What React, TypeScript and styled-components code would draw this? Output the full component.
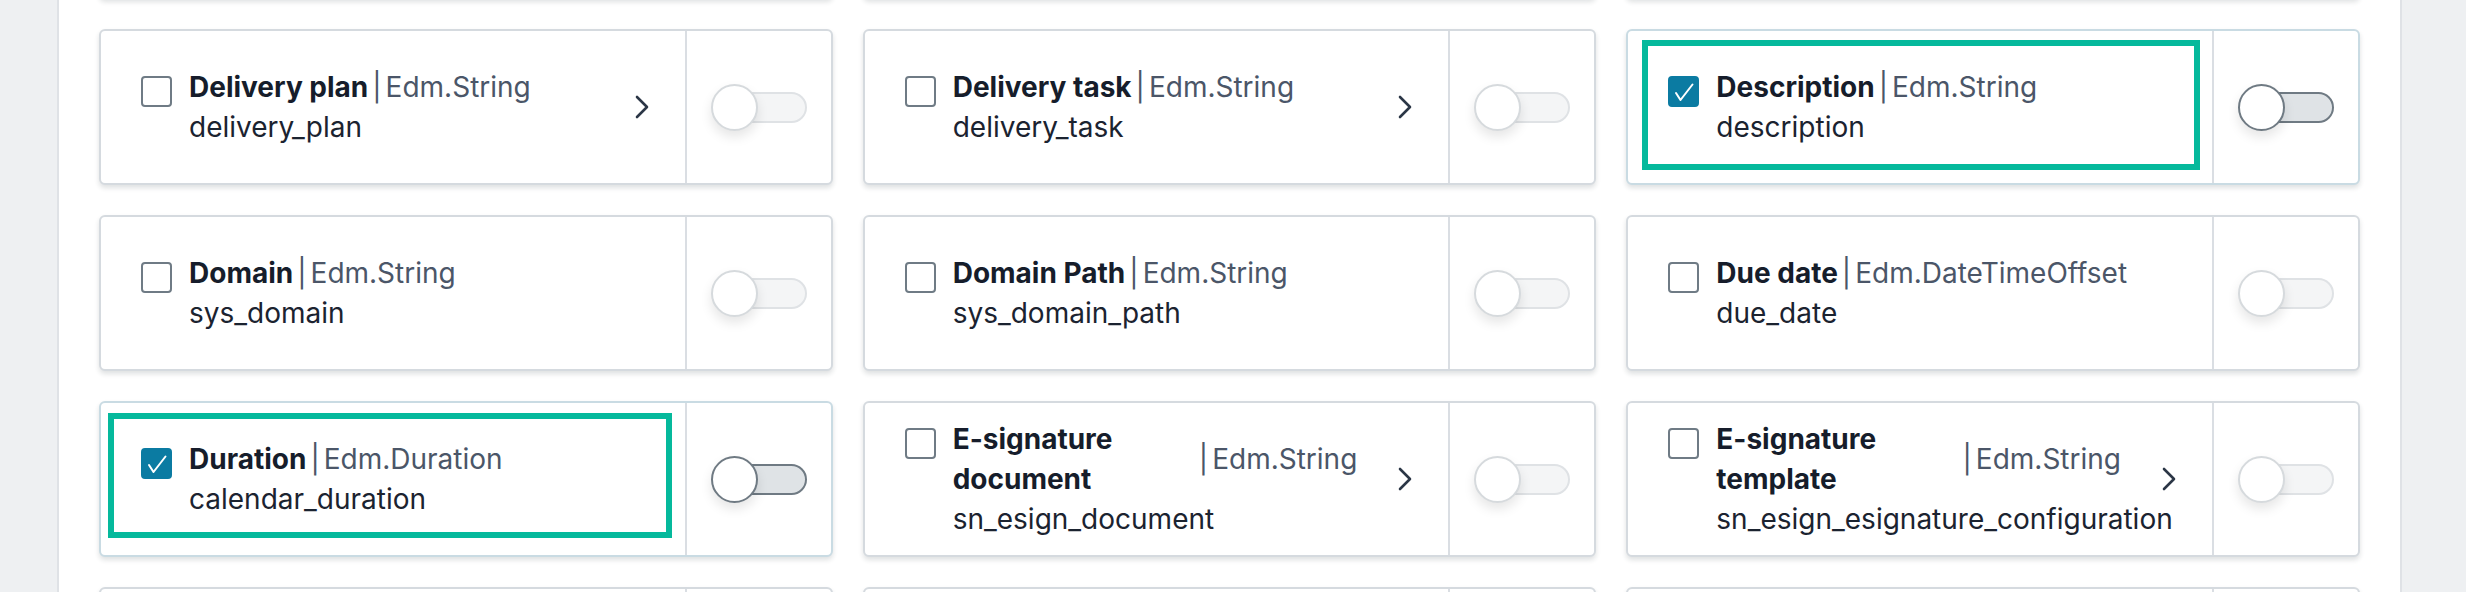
import React from 'react';
import styled, { createGlobalStyle } from 'styled-components';

const GlobalStyle = createGlobalStyle`
  html, body {
    margin: 0;
    height: 592px;
    overflow: hidden;
    background: #eef0f2;
    font-family: Inter, 'Liberation Sans', sans-serif;
  }
`;

const Page = styled.div`
  display: flex;
  height: 592px;
  overflow: hidden;
`;

const Panel = styled.main`
  box-sizing: border-box;
  margin-left: 57px;
  width: 2345px;
  background: #fff;
  border-left: 2px solid #dfe2e6;
  border-right: 2px solid #dfe2e6;
  padding: 0 40px;
`;

const Grid = styled.div`
  display: grid;
  grid-template-columns: repeat(3, minmax(0, 1fr));
  grid-auto-rows: 156px;
  column-gap: 30px;
  row-gap: 30px;
  margin-top: -157px;
`;

const Card = styled.div<{ $checked?: boolean }>`
  position: relative;
  box-sizing: border-box;
  display: flex;
  background: #fff;
  border: 2px solid ${(p) => (p.$checked ? '#c9dbe3' : '#d5dadf')};
  border-radius: 6px;
  box-shadow: 0 3px 5px rgba(30, 40, 50, 0.14);
`;

const Main = styled.div`
  flex: 1;
  min-width: 0;
  display: flex;
  align-items: center;
  gap: 40px;
  padding: 0 35px 0 40px;
`;

const Body = styled.div`
  flex: 1;
  min-width: 0;
  display: flex;
  align-items: flex-start;
  gap: 17px;
`;

const Checkbox = styled.span<{ $checked?: boolean }>`
  box-sizing: border-box;
  flex: none;
  width: 31px;
  height: 31px;
  margin-top: 9px;
  border-radius: 4px;
  border: 2px solid ${(p) => (p.$checked ? '#0b7ba2' : '#6f7b85')};
  background: ${(p) => (p.$checked ? '#0b7ba2' : '#fff')};
  display: flex;
`;

const Info = styled.div`
  flex: 1;
  min-width: 0;
  font-size: 28px;
  line-height: 40px;
`;

const Header = styled.div`
  display: flex;
  align-items: center;
`;

const Title = styled.span`
  flex: 0 1 auto;
  min-width: 0;
  font-weight: 700;
  color: #161d2b;
`;

const Type = styled.span`
  flex: none;
  margin-left: 4px;
  white-space: nowrap;
  color: #4b5668;
`;

const Pipe = styled.span`
  margin-right: 4px;
`;

const Code = styled.div`
  white-space: nowrap;
  color: #1b2330;
`;

const Chevron = styled.svg`
  flex: none;
  width: 16px;
  height: 24px;
`;

const ToggleCell = styled.div`
  flex: none;
  width: 146px;
  box-sizing: border-box;
  border-left: 2px solid #dadee3;
  display: flex;
  align-items: center;
  justify-content: center;
`;

const Toggle = styled.span`
  position: relative;
  display: block;
  width: 96px;
  height: 47px;
`;

const Track = styled.span<{ $on?: boolean }>`
  position: absolute;
  left: 14px;
  right: 0;
  top: 8px;
  bottom: 8px;
  box-sizing: border-box;
  border-radius: 16px;
  border: 2px solid ${(p) => (p.$on ? '#6f7a83' : '#dfe2e5')};
  background: ${(p) => (p.$on ? '#dfe3e6' : '#f4f5f6')};
`;

const Thumb = styled.span<{ $on?: boolean }>`
  position: relative;
  display: block;
  box-sizing: border-box;
  width: 47px;
  height: 47px;
  border-radius: 50%;
  background: #fff;
  border: 2px solid ${(p) => (p.$on ? '#6f7a83' : '#d6dadd')};
  box-shadow: 0 6px 12px rgba(0, 0, 0, 0.1);
`;

const Highlight = styled.span<{ $l: number; $t: number; $w: number; $h: number }>`
  position: absolute;
  left: ${(p) => p.$l}px;
  top: ${(p) => p.$t}px;
  width: ${(p) => p.$w}px;
  height: ${(p) => p.$h}px;
  box-sizing: border-box;
  border: 6px solid #05b99c;
  pointer-events: none;
`;

type Field = {
  title?: string;
  type?: string;
  code: string;
  checked?: boolean;
  more?: boolean;
  mark?: [number, number, number, number];
};

// the first and last rows are scrolled out of view: only their card edges show
const fields: Field[] = [
  { code: 'r0a' },
  { code: 'r0b' },
  { code: 'r0c' },
  { title: 'Delivery plan', type: 'Edm.String', code: 'delivery_plan', more: true },
  { title: 'Delivery task', type: 'Edm.String', code: 'delivery_task', more: true },
  { title: 'Description', type: 'Edm.String', code: 'description', checked: true, mark: [14, 9, 558, 130] },
  { title: 'Domain', type: 'Edm.String', code: 'sys_domain' },
  { title: 'Domain Path', type: 'Edm.String', code: 'sys_domain_path' },
  { title: 'Due date', type: 'Edm.DateTimeOffset', code: 'due_date' },
  { title: 'Duration', type: 'Edm.Duration', code: 'calendar_duration', checked: true, mark: [7, 10, 564, 125] },
  { title: 'E-signature document', type: 'Edm.String', code: 'sn_esign_document', more: true },
  { title: 'E-signature template', type: 'Edm.String', code: 'sn_esign_esignature_configuration', more: true },
  { code: 'r4a' },
  { code: 'r4b' },
  { code: 'r4c' },
];

const FieldCard = ({ f }: { f: Field }) => (
  <Card $checked={f.checked}>
    <Main>
      {f.title && (
        <Body>
          <Checkbox $checked={f.checked}>
            {f.checked && (
              <svg width='27' height='27' viewBox='0 0 27 27'>
                <polyline points='6,15 10.5,22 22.5,6.5' fill='none' stroke='#fff' strokeWidth='2' strokeLinecap='round' strokeLinejoin='round' />
              </svg>
            )}
          </Checkbox>
          <Info>
            <Header>
              <Title>{f.title}</Title>
              <Type>
                <Pipe>|</Pipe>
                {f.type}
              </Type>
            </Header>
            <Code>{f.code}</Code>
          </Info>
        </Body>
      )}
      {f.more && (
        <Chevron viewBox='0 0 16 24'>
          <polyline points='3,2 13,12 3,22' fill='none' stroke='#2b3646' strokeWidth='2.6' strokeLinecap='round' strokeLinejoin='round' />
        </Chevron>
      )}
    </Main>
    <ToggleCell>
      {f.title && (
        <Toggle>
          <Track $on={f.checked} />
          <Thumb $on={f.checked} />
        </Toggle>
      )}
    </ToggleCell>
    {f.mark && <Highlight $l={f.mark[0]} $t={f.mark[1]} $w={f.mark[2]} $h={f.mark[3]} />}
  </Card>
);

const App = (): JSX.Element => {
  return (
    <Page>
      <GlobalStyle />
      <Panel>
        <Grid>
          {fields.map((f) => (
            <FieldCard key={f.code} f={f} />
          ))}
        </Grid>
      </Panel>
    </Page>
  );
};

export default App;
